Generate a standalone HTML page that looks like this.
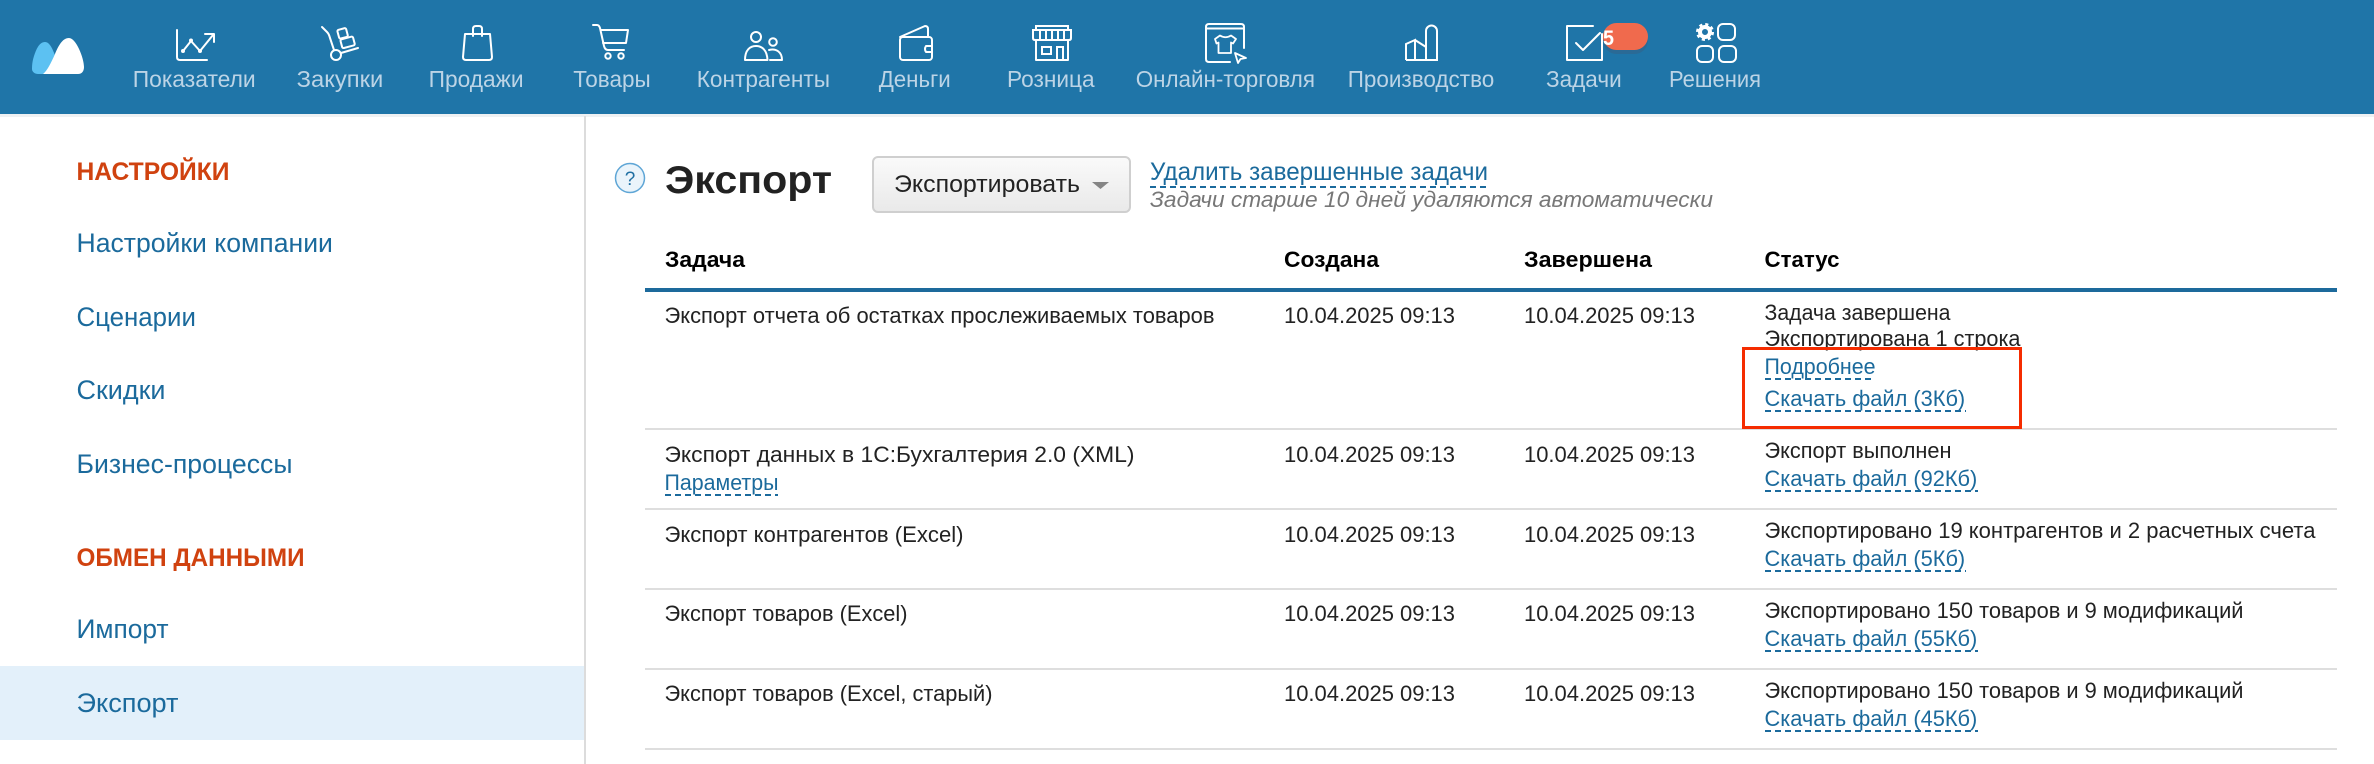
<!DOCTYPE html>
<html lang="ru"><head><meta charset="utf-8"><title>Экспорт</title>
<style>
html,body{margin:0;padding:0;background:#fff;width:2374px;height:764px;overflow:hidden}
svg{display:block;font-family:"Liberation Sans",sans-serif}
text{white-space:pre}
.n{font-size:23px;fill:#bcd4e6}
.i{fill:none;stroke:#fff;stroke-width:2;stroke-linecap:round;stroke-linejoin:round}
.s{font-size:27px;fill:#1b6a9c}
.o{font-size:25px;font-weight:bold;fill:#d0420f}
.t{font-size:22px;fill:#222}
.h{font-size:22px;font-weight:bold;fill:#000}
.l{font-size:22px;fill:#1b6a9c}
.d{stroke:#1b6a9c;stroke-width:2;stroke-dasharray:6 4}
.r{fill:#dedede}
</style></head><body>
<svg width="2374" height="764" viewBox="0 0 2374 764" xmlns="http://www.w3.org/2000/svg">
<rect width="2374" height="764" fill="#fff"/>
<rect width="2374" height="114" fill="#1f75a8"/>
<rect y="114" width="2374" height="3" fill="#eef1f3"/>
<rect x="0" y="666" width="584" height="74" fill="#e3f0fa"/>
<rect x="584" y="116" width="2" height="648" fill="#dcdcdc"/>

<!-- logo -->
<path d="M45 42C39 42 36 50 34 56C32 62 32 67 32 69C32 72 35 74 38 74L43 74C50 71 56 62 56 58C53 50 50 42 45 42Z" fill="#5cc1f2"/>
<path d="M69 38C62 38 58 47 55 54C51 63 47 71 43 74L78 74C82 74 84 71 84 67C84 58 76 38 69 38Z" fill="#fff"/>

<!-- Показатели -->
<g class="i">
<path d="M177 30V57Q177 60 180 60H207"/>
<path d="M183 51L191 41L200 51L213 35M205 34H214V42"/>
<circle cx="183" cy="51" r="1" fill="#fff"/><circle cx="191" cy="40.5" r="1" fill="#fff"/><circle cx="200" cy="51" r="1" fill="#fff"/>
<!-- Закупки -->
<path d="M322 27L327 32Q329 34 330 38L334 50"/>
<circle cx="336" cy="55" r="5"/>
<path d="M341 53L358 48"/>
<rect x="338" y="29" width="9" height="9" rx="1.5" transform="rotate(-15 342 33)"/>
<rect x="341" y="38" width="13" height="9" rx="1.5" transform="rotate(-15 347 42)"/>
<!-- Продажи -->
<path d="M465 34H490L492 57Q492 60 489 60H466Q463 60 463 57Z"/>
<path d="M473 36V29Q473 26 476 26H479Q482 26 482 29V36"/>
<!-- Товары -->
<path d="M593 25H597Q599 25 600 28L604 46Q605 50 608 50H624"/>
<path d="M601 30H628L626 43H603"/>
<circle cx="608" cy="56" r="2.7"/><circle cx="621" cy="56" r="2.7"/>
<!-- Контрагенты -->
<circle cx="756" cy="37" r="5"/>
<path d="M745 60C745 50 750 46 756 46C762 46 767 50 767.5 60Z"/>
<circle cx="773" cy="42" r="3.8"/>
<path d="M769 50C776 48 782 52 782 60H770"/>
<!-- Деньги -->
<rect x="900" y="37" width="32" height="23" rx="3"/>
<path d="M900 37L925 26Q928 26 928 29V37"/>
<path d="M932 46H926Q924 49 926 52H932"/>
<!-- Розница -->
<path d="M1036 30V26H1068V30M1033 30H1071V38Q1071 40 1069 40H1035Q1033 40 1033 38Z" stroke-linecap="butt" stroke-linejoin="miter"/>
<path d="M1040 30V40M1046 30V40M1052 30V40M1058 30V40M1064 30V40" stroke-linecap="butt"/>
<path d="M1036 40V60H1068V40" stroke-linecap="butt"/>
<rect x="1042" y="47" width="9" height="7" stroke-linejoin="miter"/>
<path d="M1057 60V47H1063V60" stroke-linecap="butt" stroke-linejoin="miter"/>
<!-- Онлайн-торговля -->
<path d="M1244 48V27Q1244 24 1241 24H1209Q1206 24 1206 27V59Q1206 62 1209 62H1230"/>
<path d="M1206 28.5H1244"/>
<path d="M1220 35.500Q1225.500 39 1231 35.500L1236 39L1233 43.500L1231 42.500V53H1218.500V42.500L1216.500 43.500L1215 39Z" stroke-width="1.800"/>
<path d="M1235 53L1246 58L1240.500 59L1238 63Z" stroke-width="1.800"/>
<!-- Производство -->
<path d="M1406 60H1437V31A5.500 5.500 0 0 0 1426 31V60M1406 60V44L1415 40V60M1415 40L1426 47" stroke-linejoin="miter" stroke-linecap="butt"/>
<!-- Задачи -->
<path d="M1593 26H1567V60H1602V34" stroke-linejoin="round"/>
<path d="M1576 43L1583 50L1600 33"/>
<!-- Решения -->
<rect x="1718" y="24" width="17" height="16" rx="5"/>
<rect x="1697" y="46" width="16" height="16" rx="5"/>
<rect x="1719" y="46" width="17" height="16" rx="5"/>
</g>
<circle cx="1705" cy="32" r="5" fill="none" stroke="#fff" stroke-width="4"/>
<circle cx="1705" cy="32" r="7.500" fill="none" stroke="#fff" stroke-width="3" stroke-dasharray="3 2.890"/>

<rect x="1603" y="27" width="45" height="27" rx="13.500" fill="#2a6a96"/>
<rect x="1603" y="23" width="45" height="27" rx="13.500" fill="#f06a4d"/>
<text x="1603" y="45" font-size="21" font-weight="bold" fill="#fff" textLength="11" lengthAdjust="spacingAndGlyphs">5</text>

<g class="n">
<text x="132.700" y="87" textLength="123" lengthAdjust="spacingAndGlyphs">Показатели</text>
<text x="296.700" y="87" textLength="86.600" lengthAdjust="spacingAndGlyphs">Закупки</text>
<text x="428.600" y="87" textLength="95" lengthAdjust="spacingAndGlyphs">Продажи</text>
<text x="573.300" y="87" textLength="77.400" lengthAdjust="spacingAndGlyphs">Товары</text>
<text x="696.700" y="87" textLength="133.300" lengthAdjust="spacingAndGlyphs">Контрагенты</text>
<text x="878.700" y="87" textLength="72" lengthAdjust="spacingAndGlyphs">Деньги</text>
<text x="1007" y="87" textLength="87.600" lengthAdjust="spacingAndGlyphs">Розница</text>
<text x="1135.700" y="87" textLength="179.300" lengthAdjust="spacingAndGlyphs">Онлайн-торговля</text>
<text x="1347.700" y="87" textLength="146.600" lengthAdjust="spacingAndGlyphs">Производство</text>
<text x="1546" y="87" textLength="75.700" lengthAdjust="spacingAndGlyphs">Задачи</text>
<text x="1669" y="87" textLength="92" lengthAdjust="spacingAndGlyphs">Решения</text>
</g>

<!-- sidebar -->
<text class="o" x="76.500" y="180" textLength="153" lengthAdjust="spacingAndGlyphs">НАСТРОЙКИ</text>
<text class="s" x="76.500" y="252" textLength="256.400" lengthAdjust="spacingAndGlyphs">Настройки компании</text>
<text class="s" x="76.500" y="326" textLength="119.400" lengthAdjust="spacingAndGlyphs">Сценарии</text>
<text class="s" x="76.500" y="399" textLength="89" lengthAdjust="spacingAndGlyphs">Скидки</text>
<text class="s" x="76.500" y="473" textLength="216" lengthAdjust="spacingAndGlyphs">Бизнес-процессы</text>
<text class="o" x="76.500" y="566" textLength="228" lengthAdjust="spacingAndGlyphs">ОБМЕН ДАННЫМИ</text>
<text class="s" x="76.500" y="638" textLength="92" lengthAdjust="spacingAndGlyphs">Импорт</text>
<text class="s" x="76.500" y="712" textLength="102" lengthAdjust="spacingAndGlyphs">Экспорт</text>

<!-- title bar -->
<circle cx="630" cy="178" r="14.500" fill="#eaf4fb" stroke="#5fa6d6" stroke-width="1.500"/>
<text x="630" y="185" font-size="19" fill="#1f6fa3" text-anchor="middle">?</text>
<text x="665" y="193" font-size="39" font-weight="bold" fill="#222" textLength="167" lengthAdjust="spacingAndGlyphs">Экспорт</text>
<defs><linearGradient id="b" x1="0" y1="0" x2="0" y2="1"><stop offset="0" stop-color="#fafafa"/><stop offset="1" stop-color="#e9e9e9"/></linearGradient></defs>
<rect x="873" y="157" width="257" height="55" rx="5" fill="url(#b)" stroke="#cfcfcf" stroke-width="2"/>
<text x="894" y="192" font-size="24" fill="#222" textLength="186" lengthAdjust="spacingAndGlyphs">Экспортировать</text>
<path d="M1092 182H1109L1100.500 189Z" fill="#858585"/>
<text x="1150" y="180" font-size="25" fill="#1b6a9c" textLength="338" lengthAdjust="spacingAndGlyphs">Удалить завершенные задачи</text>
<line class="d" x1="1150" y1="187" x2="1488" y2="187"/>
<text x="1150" y="207" font-size="22" font-style="italic" fill="#777" textLength="563" lengthAdjust="spacingAndGlyphs">Задачи старше 10 дней удаляются автоматически</text>

<!-- table head -->
<text class="h" x="665" y="267" textLength="80" lengthAdjust="spacingAndGlyphs">Задача</text>
<text class="h" x="1284" y="267" textLength="95" lengthAdjust="spacingAndGlyphs">Создана</text>
<text class="h" x="1524" y="267" textLength="128" lengthAdjust="spacingAndGlyphs">Завершена</text>
<text class="h" x="1764.500" y="267" textLength="75" lengthAdjust="spacingAndGlyphs">Статус</text>
<rect x="645" y="288" width="1692" height="4" fill="#1d6a9c"/>

<!-- row lines -->
<rect class="r" x="645" y="428" width="1692" height="2"/>
<rect class="r" x="645" y="508" width="1692" height="2"/>
<rect class="r" x="645" y="588" width="1692" height="2"/>
<rect class="r" x="645" y="668" width="1692" height="2"/>
<rect class="r" x="645" y="748" width="1692" height="2"/>

<!-- row 1 -->
<text class="t" x="664.500" y="323" textLength="550" lengthAdjust="spacingAndGlyphs">Экспорт отчета об остатках прослеживаемых товаров</text>
<text class="t" x="1284" y="323" textLength="171" lengthAdjust="spacingAndGlyphs">10.04.2025 09:13</text>
<text class="t" x="1524" y="323" textLength="171" lengthAdjust="spacingAndGlyphs">10.04.2025 09:13</text>
<text class="t" x="1764.500" y="320" textLength="186" lengthAdjust="spacingAndGlyphs">Задача завершена</text>
<text class="t" x="1764.500" y="346" textLength="256" lengthAdjust="spacingAndGlyphs">Экспортирована 1 строка</text>
<text class="l" x="1764.500" y="374" textLength="111" lengthAdjust="spacingAndGlyphs">Подробнее</text>
<line class="d" x1="1765" y1="379" x2="1875" y2="379"/>
<text class="l" x="1764.500" y="406" textLength="200.700" lengthAdjust="spacingAndGlyphs">Скачать файл (3Кб)</text>
<line class="d" x1="1765" y1="411" x2="1966" y2="411"/>
<rect x="1743.500" y="348.500" width="277" height="79" fill="none" stroke="#f52c00" stroke-width="3"/>

<!-- row 2 -->
<text class="t" x="664.500" y="462" textLength="470" lengthAdjust="spacingAndGlyphs">Экспорт данных в 1С:Бухгалтерия 2.0 (XML)</text>
<text class="l" x="664.500" y="490" textLength="114" lengthAdjust="spacingAndGlyphs">Параметры</text>
<line class="d" x1="665" y1="495" x2="778" y2="495"/>
<text class="t" x="1284" y="462" textLength="171" lengthAdjust="spacingAndGlyphs">10.04.2025 09:13</text>
<text class="t" x="1524" y="462" textLength="171" lengthAdjust="spacingAndGlyphs">10.04.2025 09:13</text>
<text class="t" x="1764.500" y="458" textLength="187" lengthAdjust="spacingAndGlyphs">Экспорт выполнен</text>
<text class="l" x="1764.500" y="486" textLength="212.800" lengthAdjust="spacingAndGlyphs">Скачать файл (92Кб)</text>
<line class="d" x1="1765" y1="491" x2="1978" y2="491"/>

<!-- row 3 -->
<text class="t" x="664.500" y="542" textLength="299" lengthAdjust="spacingAndGlyphs">Экспорт контрагентов (Excel)</text>
<text class="t" x="1284" y="542" textLength="171" lengthAdjust="spacingAndGlyphs">10.04.2025 09:13</text>
<text class="t" x="1524" y="542" textLength="171" lengthAdjust="spacingAndGlyphs">10.04.2025 09:13</text>
<text class="t" x="1764.500" y="538" textLength="551" lengthAdjust="spacingAndGlyphs">Экспортировано 19 контрагентов и 2 расчетных счета</text>
<text class="l" x="1764.500" y="566" textLength="200.700" lengthAdjust="spacingAndGlyphs">Скачать файл (5Кб)</text>
<line class="d" x1="1765" y1="571" x2="1966" y2="571"/>

<!-- row 4 -->
<text class="t" x="664.500" y="621" textLength="243" lengthAdjust="spacingAndGlyphs">Экспорт товаров (Excel)</text>
<text class="t" x="1284" y="621" textLength="171" lengthAdjust="spacingAndGlyphs">10.04.2025 09:13</text>
<text class="t" x="1524" y="621" textLength="171" lengthAdjust="spacingAndGlyphs">10.04.2025 09:13</text>
<text class="t" x="1764.500" y="618" textLength="479" lengthAdjust="spacingAndGlyphs">Экспортировано 150 товаров и 9 модификаций</text>
<text class="l" x="1764.500" y="646" textLength="212.800" lengthAdjust="spacingAndGlyphs">Скачать файл (55Кб)</text>
<line class="d" x1="1765" y1="651" x2="1978" y2="651"/>

<!-- row 5 -->
<text class="t" x="664.500" y="701" textLength="328" lengthAdjust="spacingAndGlyphs">Экспорт товаров (Excel, старый)</text>
<text class="t" x="1284" y="701" textLength="171" lengthAdjust="spacingAndGlyphs">10.04.2025 09:13</text>
<text class="t" x="1524" y="701" textLength="171" lengthAdjust="spacingAndGlyphs">10.04.2025 09:13</text>
<text class="t" x="1764.500" y="698" textLength="479" lengthAdjust="spacingAndGlyphs">Экспортировано 150 товаров и 9 модификаций</text>
<text class="l" x="1764.500" y="726" textLength="212.800" lengthAdjust="spacingAndGlyphs">Скачать файл (45Кб)</text>
<line class="d" x1="1765" y1="731" x2="1978" y2="731"/>
</svg>
</body></html>
